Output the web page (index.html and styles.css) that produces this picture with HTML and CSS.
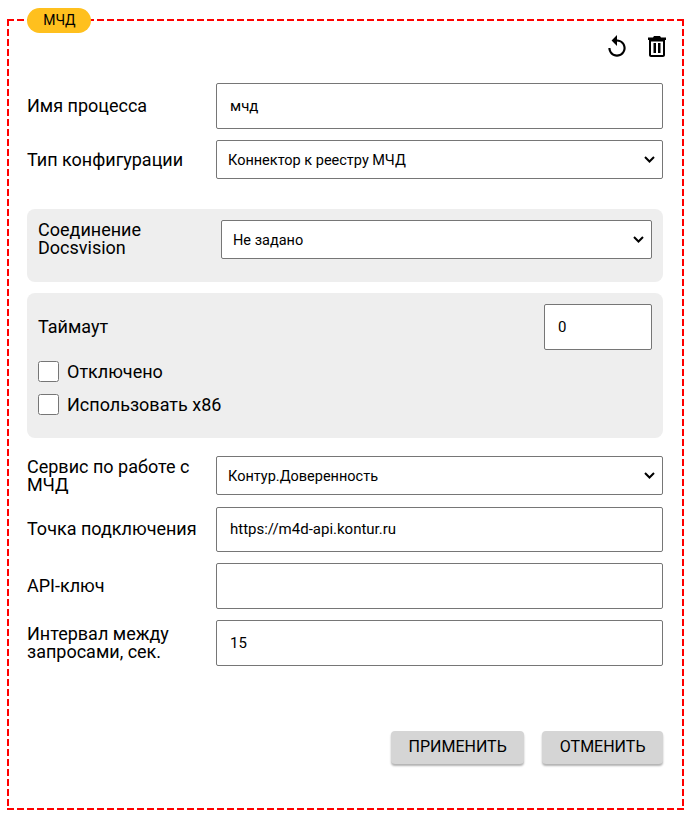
FILE: index.html
```html
<!DOCTYPE html>
<html lang="en">
<head>
  <meta charset="UTF-8">
  <title>МЧД</title>
  <meta name="viewport" content="width=device-width, initial-scale=1.0">
  <link rel="stylesheet" href="styles.css">
</head>
<body>
  <div class="frame">
    <span class="badge">МЧД</span>

    <div class="toolbar">
      <button class="icon-btn" title="Сбросить">
        <svg width="26" height="26" viewBox="0 0 24 24"><path d="M12 5V1L7 6l5 5V7c3.31 0 6 2.69 6 6s-2.69 6-6 6-6-2.69-6-6H4c0 4.42 3.58 8 8 8s8-3.58 8-8-3.58-8-8-8z"/></svg>
      </button>
      <button class="icon-btn" title="Удалить">
        <svg width="26" height="26" viewBox="0 0 26 26"><path d="M10 2h6l1 1.500h5v2.500H4V3.500h5zM5 6h16v15c0 1.100-.9 2-2 2H7c-1.100 0-2-.9-2-2zm2 1.500V21h12V7.500zM9.500 9h2.500v10H9.500zm4.500 0h2.500v10H14z" fill-rule="evenodd"/></svg>
      </button>
    </div>

    <div class="row">
      <label class="label">Имя процесса</label>
      <input class="field" type="text" value="мчд">
    </div>
    <div class="row row-type">
      <label class="label">Тип конфигурации</label>
      <select class="field select"><option>Коннектор к реестру МЧД</option></select>
    </div>

    <div class="group group-conn">
      <div class="row">
        <label class="label label-narrow">Соединение Docsvision</label>
        <select class="field select"><option>Не задано</option></select>
      </div>
    </div>

    <div class="group group-opts">
      <div class="row row-timeout">
        <label class="label">Таймаут</label>
        <input class="field field-short" type="text" value="0">
      </div>
      <label class="check"><input type="checkbox"><span>Отключено</span></label>
      <label class="check"><input type="checkbox"><span>Использовать x86</span></label>
    </div>

    <div class="row row-service">
      <label class="label">Сервис по работе с МЧД</label>
      <select class="field select"><option>Контур.Доверенность</option></select>
    </div>
    <div class="row row-url">
      <label class="label">Точка подключения</label>
      <input class="field field-url" type="text" value="https://m4d-api.kontur.ru">
    </div>
    <div class="row row-key">
      <label class="label">API-ключ</label>
      <input class="field" type="text">
    </div>
    <div class="row row-interval">
      <label class="label">Интервал между запросами, сек.</label>
      <input class="field" type="text" value="15">
    </div>

    <div class="actions">
      <button class="btn">ПРИМЕНИТЬ</button>
      <button class="btn">ОТМЕНИТЬ</button>
    </div>
  </div>
</body>
</html>
```

FILE: styles.css
```css
* {
  box-sizing: border-box;
}
body {
  font-family: Roboto, "Liberation Sans", sans-serif;
  background: #fff;
  color: #000;
  margin: 0;
  padding: 19px 7px 7px;
}
/* long dashes, a plain dashed border comes out too short here */
.frame {
  position: relative;
  width: 677px;
  height: 791px;
  padding: 15px 21px 0 20px;
  background-image:
    repeating-linear-gradient(90deg, #f00 0 7px, transparent 7px 10px),
    repeating-linear-gradient(90deg, #f00 0 7px, transparent 7px 10px),
    repeating-linear-gradient(180deg, #f00 0 7px, transparent 7px 10px),
    repeating-linear-gradient(180deg, #f00 0 7px, transparent 7px 10px);
  background-size: 100% 2px, 100% 2px, 2px 100%, 2px 100%;
  background-position: 0 0, 0 100%, 0 0, 100% 0;
  background-repeat: no-repeat;
}
.badge {
  position: absolute;
  left: 20px;
  top: -11px;
  width: 64px;
  height: 25px;
  padding-left: 1px;
  border-radius: 13px;
  background: #ffc01e;
  font-size: 14px;
  line-height: 25px;
  text-align: center;
}
.toolbar {
  display: flex;
  justify-content: flex-end;
  gap: 14px;
  height: 49px;
  margin-right: -7px;
}
.icon-btn {
  width: 26px;
  height: 26px;
  padding: 0;
  border: none;
  background: none;
}
.icon-btn svg {
  display: block;
}
.row {
  display: flex;
  align-items: center;
}
.label {
  flex: 0 0 189px;
  font-size: 18px;
  line-height: 18px;
  padding-right: 16px;
}
.field {
  flex: 1;
  min-width: 0;
  height: 46px;
  padding: 0 13px;
  border: 1px solid #767676;
  border-radius: 2px;
  background: #fff;
  font-family: inherit;
  font-size: 15px;
  color: #000;
}
.field-url {
  height: 45px;
  padding-bottom: 2px;
}
.select {
  appearance: none;
  height: 39px;
  padding: 2px 11px 0;
  font-size: 14.5px;
  background: #fff url("data:image/svg+xml,%3Csvg xmlns='http://www.w3.org/2000/svg' width='11' height='7'%3E%3Cpath d='M1 1l4.500 4.500L10 1' fill='none' stroke='%23000' stroke-width='2'/%3E%3C/svg%3E") no-repeat right 7px center;
}
.row-type {
  margin-top: 11px;
}
.group {
  margin-top: 11px;
  padding: 11px;
  border-radius: 8px;
  background: #eee;
}
.group-conn {
  margin-top: 30px;
  height: 73px;
}
.label-narrow {
  flex-basis: 183px;
  align-self: flex-start;
  padding-top: 1px;
  padding-right: 40px;
}
.group-opts {
  height: 145px;
}
.row-timeout {
  justify-content: space-between;
  margin-bottom: 11px;
}
.field-short {
  flex: 0 0 108px;
}
.check {
  display: flex;
  align-items: center;
  gap: 8px;
  height: 21px;
  margin-bottom: 12px;
  font-size: 18px;
}
.check input {
  width: 21px;
  height: 21px;
  margin: 0;
}
.row-service {
  margin-top: 18px;
}
.row-url {
  margin-top: 12px;
}
.row-url .label {
  padding-bottom: 2px;
}
.row-key, .row-interval {
  margin-top: 11px;
}
.actions {
  display: flex;
  justify-content: flex-end;
  gap: 18px;
  margin-top: 65px;
}
.btn {
  height: 33px;
  padding: 0 17.5px 2px;
  border: none;
  border-radius: 4px;
  background: #d5d5d5;
  font-family: inherit;
  font-size: 16px;
  color: #000;
  box-shadow: 0 2px 2px rgba(0,0,0,0.3);
}
```
